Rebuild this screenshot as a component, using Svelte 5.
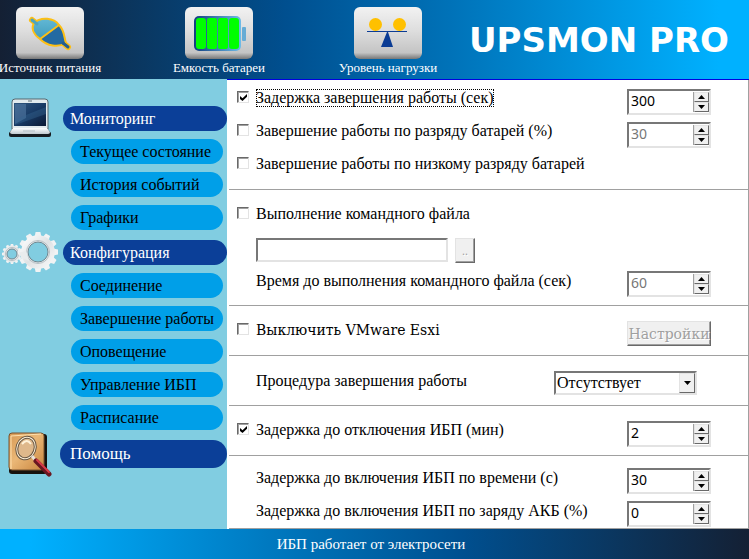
<script>
  let focused = $state("shutdown");

  let form = $state({
    shutdownOn: true,
    shutdownDelay: 300,
    dischargeOn: false,
    discharge: 30,
    lowBattery: false,
    runFile: false,
    filePath: "",
    fileTime: 60,
    esxi: false,
    procedure: "Отсутствует",
    powerOffOn: true,
    powerOffDelay: 2,
    powerOnDelay: 30,
    powerOnCharge: 0
  });

  const sections = [
    {
      icon: "laptop",
      title: "Мониторинг",
      items: ["Текущее состояние", "История событий", "Графики"]
    },
    {
      icon: "gears",
      title: "Конфигурация",
      items: ["Соединение", "Завершение работы", "Оповещение", "Управление ИБП", "Расписание"]
    },
    { icon: "search", title: "Помощь", items: [] }
  ];

  const teeth = Array.from({ length: 12 }, (_, i) => i * 30);

  function step(key, amount) {
    form[key] = Math.max(0, Number(form[key]) + amount);
  }
</script>

{#snippet spin(key, id, disabled, label)}
  <div class="spin">
    <input type="number" {id} aria-label={label} min="0" bind:value={form[key]} {disabled} />
    <div class="arrows">
      <button type="button" aria-label="Больше" {disabled} onclick={() => step(key, 1)}>
        <svg width="7" height="4" viewBox="0 0 7 4"><path d="M0 4 3.5 0 7 4z" /></svg>
      </button>
      <button type="button" aria-label="Меньше" {disabled} onclick={() => step(key, -1)}>
        <svg width="7" height="4" viewBox="0 0 7 4"><path d="M0 0h7L3.5 4z" /></svg>
      </button>
    </div>
  </div>
{/snippet}

{#snippet gear(x, y, r, hole)}
  <g transform="translate({x} {y})">
    {#each teeth as angle}
      <path
        transform="rotate({angle})"
        d="M{-r * 0.17} {-r * 0.75}L{-r * 0.12} {-r}H{r * 0.12}L{r * 0.17} {-r * 0.75}z"
        fill="#f1f3f4"
      />
    {/each}
    <circle r={(r * 0.84 + hole) / 2} fill="none" stroke="url(#steel)" stroke-width={r * 0.84 - hole} />
    <circle r={hole} fill="none" stroke="#6f8790" stroke-width="1" />
    <circle r={hole + 1.5} fill="none" stroke="#b8c0c4" stroke-width="1" />
  </g>
{/snippet}

<div class="app">
  <header>
    <nav>
      <button type="button" class="tool">
        <svg width="68" height="52" viewBox="0 0 68 52">
          <defs>
            <linearGradient id="tile" x2="0" y2="1">
              <stop offset="0" stop-color="#f2f2f2" />
              <stop offset=".45" stop-color="#dedede" />
              <stop offset=".88" stop-color="#c4c4c4" />
              <stop offset="1" stop-color="#777" />
            </linearGradient>
            <linearGradient id="plug" x2="0" y2="1">
              <stop offset="0" stop-color="#62b8d5" />
              <stop offset="1" stop-color="#3593b4" />
            </linearGradient>
          </defs>
          <rect width="68" height="52" rx="6" fill="url(#tile)" />
          <path d="m16 13 5 4M46 35l6 5" stroke="#fdbf14" stroke-width="6" stroke-linecap="round" />
          <path d="M18 16C25 9 38 11 43 18C49 24 48 31 50 36C42 41 31 39 24 32C17 27 15 21 18 16z" fill="url(#plug)" />
          <path d="M43 18C49 24 48 31 50 36C42 41 31 39 24 32z" fill="#246aa2" />
          <path d="M18 16C25 9 38 11 43 18C49 24 48 31 50 36C42 41 31 39 24 32C17 27 15 21 18 16zM24 32l19-14" fill="none" stroke="#fdbf14" stroke-width="2" />
          <path d="m16 13 5 4" stroke="#4da5be" stroke-width="3" stroke-linecap="round" />
          <path d="m47 36 5 4" stroke="#235e90" stroke-width="3" stroke-linecap="round" />
        </svg>
        <span>Источник питания</span>
      </button>
      <button type="button" class="tool">
        <svg width="68" height="52" viewBox="0 0 68 52">
          <defs>
            <linearGradient id="cell" x2="1" y2="0">
              <stop offset="0" stop-color="#123f80" />
              <stop offset="1" stop-color="#6fbbe7" />
            </linearGradient>
          </defs>
          <rect width="68" height="52" rx="6" fill="url(#tile)" />
          <rect x="9" y="9" width="47" height="35" rx="5" fill="url(#cell)" />
          <rect x="57" y="20" width="4" height="14" rx="1" fill="#67acd5" />
          <rect x="11" y="11" width="10" height="31" rx="3" fill="#0f0" />
          <rect x="22" y="11" width="10" height="31" rx="2" fill="#0f0" />
          <rect x="33" y="11" width="10" height="31" rx="2" fill="#0f0" />
          <rect x="44" y="11" width="10" height="31" rx="3" fill="#0f0" />
        </svg>
        <span>Емкость батареи</span>
      </button>
      <button type="button" class="tool">
        <svg width="68" height="52" viewBox="0 0 68 52">
          <rect width="68" height="52" rx="6" fill="url(#tile)" />
          <circle cx="21.5" cy="17.5" r="6.5" fill="#ffc000" />
          <circle cx="45.5" cy="17.5" r="6.5" fill="#ffc000" />
          <path d="M13 24h40v1H13z" fill="#0b3c94" />
          <path d="M33 25h1l5 15H27z" fill="#0b3c94" />
        </svg>
        <span>Уровень нагрузки</span>
      </button>
    </nav>
    <div class="brand">UPSMON PRO</div>
  </header>

  <div class="body">
    <aside>
      {#each sections as section}
        <section class="group">
          <div class="pic">
            {#if section.icon === "laptop"}
              <svg width="44" height="40" viewBox="0 0 44 40">
                <defs>
                  <linearGradient id="screen" x2="1" y2="1">
                    <stop offset="0" stop-color="#31577f" />
                    <stop offset=".5" stop-color="#193b66" />
                    <stop offset="1" stop-color="#0b1934" />
                  </linearGradient>
                  <linearGradient id="base" x2="0" y2="1">
                    <stop offset="0" stop-color="#fff" />
                    <stop offset="1" stop-color="#c0c9ce" />
                  </linearGradient>
                </defs>
                <path d="M4 4q0-3 3-3h30q3 0 3 3v27H4z" fill="#e2eaed" stroke="#55666e" stroke-width="1" />
                <path d="M6 5h32v23H6z" fill="url(#screen)" />
                <path d="M7 6h11v14l-11 6z" fill="#547aa4" opacity=".6" />
                <path d="M18 17 38 9v7L7 27v-5z" fill="#376792" opacity=".4" />
                <path d="M5 30h34l4 5v2q0 2-2 2H3q-2 0-2-2v-2z" fill="#171c20" />
                <path d="M5 30h34l3 4q0 2-2 2H4q-2 0-2-2z" fill="url(#base)" />
                <path d="M15 33h12" stroke="#b3bfc5" />
                <path d="M20 3h4" stroke="#62727a" />
              </svg>
            {:else if section.icon === "gears"}
              <svg width="58" height="42" viewBox="0 0 58 42">
                <defs>
                  <linearGradient id="steel" gradientUnits="userSpaceOnUse" x1="-16" y1="-16" x2="16" y2="16">
                    <stop offset="0" stop-color="#fff" />
                    <stop offset=".5" stop-color="#dfe2e4" />
                    <stop offset="1" stop-color="#fafafa" />
                  </linearGradient>
                </defs>
                {@render gear(11, 22, 10, 5)}
                {@render gear(37, 20, 20, 10)}
                <path d="M18 20q4 1 7-2l3 11q-5-3-8-3z" fill="#e9eced" />
              </svg>
            {:else}
              <svg width="44" height="46" viewBox="0 0 44 46">
                <defs>
                  <linearGradient id="wood" x2="1" y2="1">
                    <stop offset="0" stop-color="#d79955" />
                    <stop offset=".45" stop-color="#eab776" />
                    <stop offset="1" stop-color="#c9853e" />
                  </linearGradient>
                </defs>
                <rect x="1" y="2" width="38" height="40" rx="3" fill="#17120d" />
                <rect x="1" y="1" width="35" height="37" rx="3" fill="url(#wood)" stroke="#79532e" />
                <path d="M3 37V4l30-2" fill="none" stroke="#ffe0ae" />
                <ellipse cx="18" cy="16" rx="9" ry="11" transform="rotate(20 18 16)" fill="#dfb88b" stroke="#655443" stroke-width="3" />
                <ellipse cx="18" cy="16" rx="9" ry="11" transform="rotate(20 18 16)" fill="none" stroke="#fff0d5" stroke-width="1" />
                <path d="M14 12q5-6 9 0" fill="none" stroke="#fff2d9" stroke-width="2" />
                <path d="m24 24 5 6" stroke="#e9e1d7" stroke-width="3" />
                <path d="m28 29 13 13" stroke="#691721" stroke-width="5" stroke-linecap="round" />
                <path d="m29 28 12 12" stroke="#d93b48" stroke-width="2" stroke-linecap="round" />
              </svg>
            {/if}
          </div>
          <div class="menu">
            <button type="button" class="title" class:tall={!section.items.length}>{section.title}</button>
            {#if section.items.length}
              <ul>
                {#each section.items as item}
                  <li><button type="button">{item}</button></li>
                {/each}
              </ul>
            {/if}
          </div>
        </section>
      {/each}
    </aside>

    <main>
      <div class="panel first">
        <div class="row">
          <label>
            <input type="checkbox" bind:checked={form.shutdownOn} onfocus={() => (focused = "shutdown")} />
            <span class:focused={focused === "shutdown"}>Задержка завершения работы (сек)</span>
          </label>
          {@render spin("shutdownDelay", "shutdown-delay", !form.shutdownOn, "Задержка завершения работы (сек)")}
        </div>
        <div class="row">
          <label>
            <input type="checkbox" bind:checked={form.dischargeOn} onfocus={() => (focused = "discharge")} />
            <span class:focused={focused === "discharge"}>Завершение работы по разряду батарей (%)</span>
          </label>
          {@render spin("discharge", "discharge", !form.dischargeOn, "Завершение работы по разряду батарей (%)")}
        </div>
        <div class="row">
          <label>
            <input type="checkbox" bind:checked={form.lowBattery} onfocus={() => (focused = "low")} />
            <span class:focused={focused === "low"}>Завершение работы по низкому разряду батарей</span>
          </label>
        </div>
      </div>

      <div class="panel">
        <div class="row">
          <label>
            <input type="checkbox" bind:checked={form.runFile} onfocus={() => (focused = "file")} />
            <span class:focused={focused === "file"}>Выполнение командного файла</span>
          </label>
        </div>
        <div class="row path">
          <input type="text" aria-label="Командный файл" bind:value={form.filePath} disabled={!form.runFile} />
          <button type="button" class="push browse" disabled={!form.runFile}>..</button>
        </div>
        <div class="row">
          <label class="plain" for="file-time">Время до выполнения командного файла (сек)</label>
          {@render spin("fileTime", "file-time", !form.runFile)}
        </div>
      </div>

      <div class="panel">
        <div class="row">
          <label class="esxi">
            <input type="checkbox" bind:checked={form.esxi} onfocus={() => (focused = "esxi")} />
            <span class:focused={focused === "esxi"}>Выключить VMware Esxi</span>
          </label>
          <button type="button" class="push settings" disabled={!form.esxi}>Настройки</button>
        </div>
      </div>

      <div class="panel">
        <div class="row">
          <label class="plain" for="procedure">Процедура завершения работы</label>
          <div class="combo">
            <select id="procedure" bind:value={form.procedure}>
              <option>Отсутствует</option>
            </select>
            <span class="drop" aria-hidden="true">
              <svg width="7" height="4" viewBox="0 0 7 4"><path d="M0 0h7L3.5 4z" /></svg>
            </span>
          </div>
        </div>
      </div>

      <div class="panel">
        <div class="row">
          <label>
            <input type="checkbox" bind:checked={form.powerOffOn} onfocus={() => (focused = "off")} />
            <span class:focused={focused === "off"}>Задержка до отключения ИБП (мин)</span>
          </label>
          {@render spin("powerOffDelay", "power-off-delay", !form.powerOffOn, "Задержка до отключения ИБП (мин)")}
        </div>
      </div>

      <div class="panel last">
        <div class="row">
          <label class="plain" for="power-on-delay">Задержка до включения ИБП по времени (с)</label>
          {@render spin("powerOnDelay", "power-on-delay", false)}
        </div>
        <div class="row">
          <label class="plain" for="power-on-charge">Задержка до включения ИБП по заряду АКБ (%)</label>
          {@render spin("powerOnCharge", "power-on-charge", false)}
        </div>
      </div>
    </main>
  </div>

  <footer>ИБП работает от электросети</footer>
</div>

<style>
  .app {
    display: flex;
    flex-direction: column;
    min-height: 100vh;
    font-family: "Liberation Serif", "Times New Roman", serif;
    font-size: 16px;
    line-height: 18px;
    color: #000;
  }
  .app * {
    box-sizing: border-box;
  }
  button {
    margin: 0;
    padding: 0;
    border: 0;
    font: inherit;
    color: inherit;
  }
  svg {
    display: block;
  }

  header {
    display: flex;
    align-items: center;
    height: 79px;
    background: linear-gradient(to right, #142034 0%, #004f8f 38%, #0072b8 60%, #00b1ff 96%);
  }
  nav {
    display: flex;
    gap: 69px;
    height: 100%;
    padding-top: 7px;
  }
  .tool {
    display: flex;
    flex-direction: column;
    align-items: center;
    width: 100px;
    background: none;
    color: #fff;
    font-size: 13px;
    white-space: nowrap;
  }
  .brand {
    margin-left: auto;
    padding-right: 20px;
    font-family: "DejaVu Sans", sans-serif;
    font-weight: bold;
    font-size: 34px;
    line-height: 40px;
    color: #fff;
    white-space: nowrap;
  }

  .body {
    display: flex;
    flex: 1;
  }
  aside {
    flex: none;
    width: 227px;
    padding-top: 17px;
    background: #81cde1;
  }
  .group {
    display: flex;
  }
  .pic {
    display: flex;
    justify-content: center;
    width: 60px;
    padding-top: 2px;
  }
  .menu {
    flex: 1;
    padding-top: 10px;
  }
  .menu ul {
    display: flex;
    flex-direction: column;
    gap: 8px;
    margin: 8px 4px 0 11px;
    padding: 0;
    list-style: none;
  }
  .menu button {
    display: block;
    width: 100%;
    height: 25px;
    padding-left: 9px;
    border-radius: 13px;
    background: #009fe8;
    text-align: left;
    white-space: nowrap;
  }
  .menu .title {
    width: auto;
    min-width: 164px;
    margin-left: 3px;
    padding-left: 7px;
    background: #0b3f98;
    color: #fff;
  }
  .menu .tall {
    min-width: 167px;
    height: 28px;
    margin-left: 0;
    padding-left: 10px;
    border-radius: 14px;
    font-size: 17px;
  }

  main {
    flex: 1;
    min-width: 0;
    padding-left: 2px;
    border-top: 1px solid #0000e0;
    background: #fff;
  }
  .panel {
    display: flex;
    flex-direction: column;
    gap: 7px;
    padding: 15px 37px 8px 8px;
    border: solid #a0a0a0;
    border-width: 0 1px 1px 0;
  }
  .first {
    padding-top: 9px;
  }
  .last {
    padding-top: 12px;
    padding-bottom: 1px;
  }
  .row {
    display: flex;
    align-items: flex-start;
    justify-content: space-between;
    min-height: 26px;
  }
  label {
    display: flex;
    gap: 7px;
    white-space: nowrap;
  }
  .plain {
    padding: 1px 0 0 19px;
  }
  .esxi {
    font-family: "DejaVu Serif", serif;
    font-size: 14px;
  }
  .focused {
    outline: 1px dotted #000;
    outline-offset: -1px;
  }
  input[type="checkbox"] {
    appearance: none;
    width: 12px;
    height: 12px;
    margin: 2px 0 0;
    border: 1px solid;
    border-color: #696969 #e3e3e3 #e3e3e3 #696969;
    box-shadow: inset 1px 1px #a0a0a0;
    background: #fff;
  }
  input[type="checkbox"]:checked::before {
    content: "";
    display: block;
    width: 7px;
    height: 7px;
    margin: 2px;
    background: #000;
    clip-path: polygon(0 29%, 36% 60%, 100% 0, 100% 40%, 36% 100%, 0 70%);
  }
  input:focus-visible,
  select:focus-visible {
    outline: none;
  }

  .spin,
  .path input,
  .combo {
    border: 2px solid;
    border-color: #777 #e3e3e3 #e3e3e3 #777;
    background: #fff;
  }
  .spin {
    display: flex;
    width: 84px;
    height: 26px;
    padding: 1px 0;
  }
  .spin input {
    flex: 1;
    min-width: 0;
    padding: 0 2px 3px;
    border: 0;
    border-right: 1px solid #a0a0a0;
    background: none;
    font: 14px "Noto Sans", sans-serif;
    color: #000;
    appearance: textfield;
  }
  .spin input:disabled {
    color: #777;
  }
  .spin input::-webkit-inner-spin-button {
    appearance: none;
    margin: 0;
  }
  .arrows {
    display: flex;
    flex-direction: column;
    width: 15px;
  }
  .arrows button,
  .drop {
    display: flex;
    flex: 1;
    align-items: center;
    justify-content: center;
    border: 1px solid;
    border-color: #e3e3e3 #696969 #696969 #e3e3e3;
    background: #f0f0f0;
  }

  .path {
    justify-content: flex-start;
    gap: 7px;
    padding-left: 19px;
  }
  .path input {
    width: 192px;
    height: 24px;
    padding: 0 3px;
    font: inherit;
  }
  .push {
    border: 1px solid;
    border-color: #e3e3e3 #696969 #696969 #e3e3e3;
    box-shadow: inset -1px -1px #a0a0a0;
    background: #f0f0f0;
  }
  .push:disabled {
    color: #a0a0a0;
    text-shadow: 1px 1px #fff;
  }
  .browse {
    width: 20px;
    height: 25px;
    font: 11px "Noto Sans", sans-serif;
  }
  .settings {
    width: 84px;
    height: 25px;
    font: 14px "DejaVu Serif", serif;
  }

  .combo {
    display: flex;
    position: relative;
    width: 143px;
    height: 24px;
    margin-right: 14px;
  }
  .combo select {
    flex: 1;
    appearance: none;
    padding: 0 18px 0 1px;
    border: 0;
    background: none;
    font: inherit;
    color: #000;
  }
  .drop {
    position: absolute;
    top: 0;
    right: 0;
    bottom: 0;
    width: 16px;
    pointer-events: none;
  }

  footer {
    padding: 6px 15px 6px 8px;
    background: linear-gradient(to right, #00b1ff 4%, #0072b8 40%, #004f8f 62%, #142034 100%);
    color: #fff;
    font-size: 15px;
    text-align: center;
  }
</style>
